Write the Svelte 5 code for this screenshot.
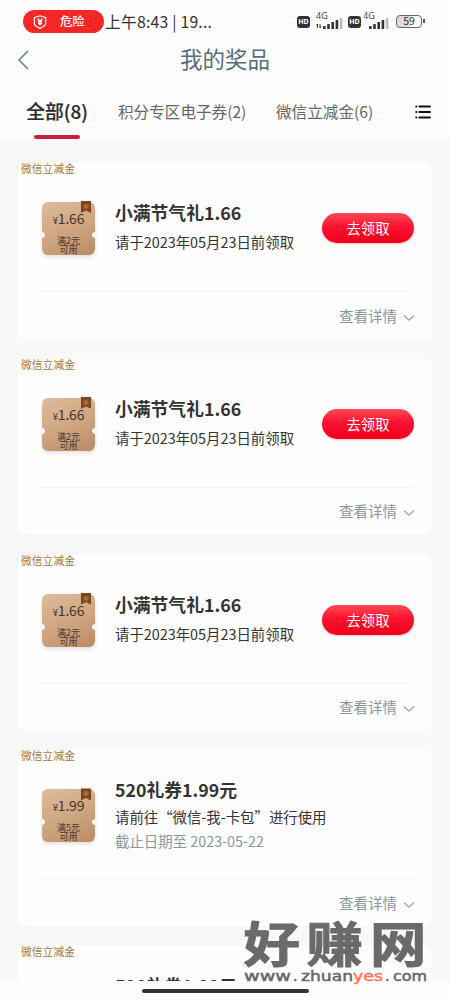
<script>
    const tabs = [
        { name: "全部(8)", width: 62 },
        { name: "积分专区电子券(2)", width: 128 },
        { name: "微信立减金(6)", width: 97 }
    ]
    let active = 0

    const coupon = {
        title: "小满节气礼1.66",
        text: "请于2023年05月23日前领取",
        price: "1.66",
        limit: "满2元",
        button: true
    }
    const used = {
        title: "520礼券1.99元",
        text: "请前往“微信-我-卡包”进行使用",
        date: "截止日期至 2023-05-22",
        price: "1.99",
        limit: "满5元"
    }
    const prizes = [coupon, coupon, coupon, used, used]
    const bars = [3, 5, 7, 9, 11]
</script>

<div class="page">
    <div class="status">
        <div class="danger">
            <svg width="14" height="14" viewBox="0 0 14 14">
                <path d="M7 .8 L12.7 2.7 V8.6 Q12.7 11 7 13.4 Q1.3 11 1.3 8.6 V2.7 Z" fill="none" stroke="#fff" stroke-width="1.2" />
                <path d="M4.8 3.8 L7 6.4 L9.2 3.8 M4.8 6.6 H9.2 M5 8.5 H9 M7 6.2 V10.6" fill="none" stroke="#fff" stroke-width="1.4" />
            </svg>
            <span>危险</span>
        </div>
        <span class="time">上午8:43 | 19...</span>
        <div class="signals">
            {#each [0, 1] as sim}
                <span class="hd">HD</span>
                <svg class="sim{sim}" width="28" height="18" viewBox="0 0 28 18">
                    <text x={sim ? -1 : 0} y="8" font-size="9" fill="#444">4G</text>
                    {#if sim === 0}
                        <path d="M1.5 13 V17 M0 14.5 L1.5 13 M4 13 V17 M4 17 L5.5 15.5" fill="none" stroke="#333" />
                    {/if}
                    {#each bars as h, i}
                        <rect x={(sim ? 5 : 7) + i * 4.2} y={18 - h} width="2.6" height={h} rx=".5" fill={i === 4 ? "#bbb" : "#333"} />
                    {/each}
                </svg>
            {/each}
            <div class="battery"><span>59</span></div>
        </div>
    </div>

    <div class="header">
        <svg width="12" height="20" viewBox="0 0 12 20">
            <path d="M10 1 L1 10 L10 19" fill="none" stroke="#607786" stroke-width="1.5" />
        </svg>
        <h1>我的奖品</h1>
    </div>

    <div class="tabs">
        {#each tabs as tab, i}
            <button class="tab" class:active={active === i} style="width: {tab.width}px" on:click={() => active = i}>{tab.name}</button>
        {/each}
        <svg width="16" height="14" viewBox="0 0 16 14">
            <path d="M4.3 1.5 H15 M4.3 7 H15 M4.3 12.5 H15" stroke="#111" stroke-width="1.8" stroke-linecap="round" />
            <path d="M1.3 1.5 H1.4 M1.3 7 H1.4 M1.3 12.5 H1.4" stroke="#111" stroke-width="2.1" stroke-linecap="round" />
        </svg>
    </div>

    <div class="list">
        {#each prizes as prize}
            <div class="card">
                <div class="tag">微信立减金</div>
                <div class="main">
                    <div class="ticket">
                        <i class="ribbon"></i>
                        <div class="price"><small>¥</small>{prize.price}</div>
                        <div class="limit">{prize.limit}<br>可用</div>
                    </div>
                    <div class="info" class:three={prize.date}>
                        <h2>{prize.title}</h2>
                        <p>{prize.text}</p>
                        {#if prize.date}
                            <p class="date">{prize.date}</p>
                        {/if}
                    </div>
                    {#if prize.button}
                        <button class="get">去领取</button>
                    {/if}
                </div>
                <div class="more">
                    <span>查看详情</span>
                    <svg width="12" height="8" viewBox="0 0 12 8">
                        <path d="M1 1.5 L6 6.2 L11 1.5" fill="none" stroke="#9aa5a8" stroke-width="1.3" />
                    </svg>
                </div>
            </div>
        {/each}
    </div>

    <div class="home"></div>

    <svg class="watermark" width="190" height="72" viewBox="0 0 190 72">
        <g class="name">
            <text x="2" y="0">好</text>
            <text x="54.5" y="0">赚</text>
            <text x="107.5" y="0">网</text>
        </g>
        <g class="site">
            <text x="3" y="64.5" textLength="47" lengthAdjust="spacingAndGlyphs">www</text>
            <text x="52" y="64.5">.</text>
            <text x="60" y="64.5" textLength="52" lengthAdjust="spacingAndGlyphs">zhuan</text>
            <text class="yes" x="112" y="64.5" textLength="30" lengthAdjust="spacingAndGlyphs">yes</text>
            <text x="144" y="64.5">.</text>
            <text x="152" y="64.5" textLength="34" lengthAdjust="spacingAndGlyphs">com</text>
        </g>
    </svg>
</div>

<style>
    :global(body) {
        margin: 0;
        background: #fdfdfd;
    }

    .page {
        width: 450px;
        height: 1000px;
        overflow: hidden;
        position: relative;
        display: flex;
        flex-direction: column;
        background: #fdfdfd;
        color: #333;
        font-family: "Noto Sans CJK SC", "Noto Sans", sans-serif;
    }

    button {
        border: none;
        padding: 0;
        background: none;
        font-family: inherit;
        white-space: nowrap;
    }

    .status {
        height: 43px;
        flex: none;
        display: flex;
        align-items: center;
        padding: 0 25px 0 23px;
    }

    .danger {
        width: 81px;
        height: 23px;
        box-sizing: border-box;
        padding-left: 10px;
        border-radius: 12px;
        background: #f82727;
        display: flex;
        align-items: center;
        gap: 13px;
        color: #fff;
        font-size: 12.3px;
        font-weight: 500;
    }

    .danger span {
        margin-top: -1px;
    }

    .time {
        margin: -1px 0 0 1px;
        font-size: 15.8px;
        letter-spacing: 0.2px;
        white-space: nowrap;
    }

    .signals {
        display: flex;
        align-items: center;
        margin-left: auto;
    }

    .signals text {
        font-family: "Noto Sans", sans-serif;
    }

    .hd {
        width: 13px;
        height: 12px;
        border-radius: 3px;
        background: #333;
        color: #fff;
        font: bold 7px/12px "Noto Sans", sans-serif;
        text-align: center;
    }

    .sim0 {
        margin: -3px 4px 0 6px;
    }

    .sim1 {
        margin: -3px 4px 0 3px;
    }

    .battery {
        position: relative;
        width: 26px;
        height: 13px;
        box-sizing: border-box;
        border: 1.5px solid #666;
        border-radius: 4px;
        background: linear-gradient(90deg, #dcdcdc 55%, #fdfdfd 55%);
        font: 400 10.5px/10px "Noto Sans CJK SC", sans-serif;
        text-align: center;
        margin-right: 3px;
    }

    .battery::after {
        content: "";
        position: absolute;
        right: -3.5px;
        top: 3px;
        width: 2px;
        height: 4px;
        background: #555;
    }

    .header {
        height: 34px;
        flex: none;
        display: flex;
        align-items: center;
        padding: 0 18px;
    }

    .header h1 {
        flex: 1;
        margin: -5px 12px 0 0;
        text-align: center;
        font-size: 22.5px;
        line-height: 34px;
        font-weight: 400;
        color: #566d7c;
    }

    .tabs {
        height: 62px;
        flex: none;
        display: flex;
        align-items: center;
        box-sizing: border-box;
        padding: 0 19px 0 26px;
        gap: 30px;
    }

    .tab {
        position: relative;
        height: 62px;
        font-size: 15.6px;
        line-height: 62px;
        margin-top: 5px;
        color: #666;
    }

    .tab.active {
        font-size: 18.8px;
        font-weight: 500;
        margin-top: 6px;
        color: #2b2b2b;
        -webkit-text-stroke: 0.2px #2b2b2b;
    }

    .tab.active::after {
        content: "";
        position: absolute;
        left: 8px;
        bottom: 3.5px;
        width: 46px;
        height: 4px;
        border-radius: 2px;
        background: #cc1f3b;
    }

    .tabs svg {
        margin: 8px 0 0 auto;
    }

    .list {
        height: 842px;
        flex: none;
        box-sizing: border-box;
        overflow: hidden;
        padding: 24px 18px 0;
        background: #f8f8f8;
        display: flex;
        flex-direction: column;
        gap: 20.3px;
    }

    .card {
        height: 175.5px;
        flex: none;
        border-radius: 8px;
        background: #fefefe;
    }

    .tag {
        height: 12px;
        padding-left: 3px;
        font-size: 10.8px;
        line-height: 11px;
        color: #a57837;
    }

    .main {
        height: 107px;
        display: flex;
        align-items: center;
        padding: 0 19px 0 24px;
    }

    .ticket {
        position: relative;
        width: 53px;
        height: 53px;
        flex: none;
        border-radius: 6px;
        background:
            radial-gradient(circle at 0 33px, #fefefe 2.5px, transparent 3.2px),
            radial-gradient(circle at 100% 33px, #fefefe 2.5px, transparent 3.2px),
            linear-gradient(155deg, #dfbc9c, #cca27e 60%, #b88a64);
        box-shadow: 0 2px 4px #00000020;
        text-align: center;
        color: #493528;
    }

    .ribbon {
        position: absolute;
        right: 4px;
        top: -1px;
        width: 10px;
        height: 12px;
        background: radial-gradient(circle at 50% 45%, #a66c3c 1.5px, #7d4520 3.5px);
        clip-path: polygon(0 0, 100% 0, 100% 100%, 50% 80%, 0 100%);
    }

    .price {
        padding-top: 8px;
        font-size: 14px;
        line-height: 17px;
        letter-spacing: -0.2px;
    }

    .price small {
        font-size: 9.5px;
    }

    .limit {
        margin-top: 7px;
        font-size: 9px;
        line-height: 9px;
    }

    .info {
        margin: -3px 0 0 20px;
        white-space: nowrap;
    }

    .info h2 {
        margin: -1px 0 1px;
        font-size: 17.8px;
        line-height: 30px;
        font-weight: 700;
    }

    .info p {
        margin: 0;
        font-size: 14.4px;
        line-height: 28px;
    }

    .three h2 {
        line-height: 28px;
    }

    .three p {
        line-height: 25px;
    }

    .info .date {
        line-height: 23px;
        color: #89979d;
    }

    .get {
        width: 92px;
        height: 30px;
        margin: -1px -1px 0 auto;
        border-radius: 15px;
        background: linear-gradient(#ff4a55, #fb1230 45%, #f0001b);
        box-shadow: 0 1px 2px #ff001c40;
        color: #fff;
        font-size: 14.4px;
        line-height: 28px;
    }

    .more {
        height: 46px;
        margin: 9px 17px 0 18px;
        border-top: 1px solid #f5f5f5;
        display: flex;
        align-items: center;
        justify-content: flex-end;
        gap: 6px;
        font-size: 14.5px;
        color: #899599;
    }

    .more svg {
        margin-top: 5px;
    }

    .home {
        width: 167px;
        height: 4px;
        margin: 8px auto 0;
        border-radius: 2px;
        background: #333;
    }

    .watermark {
        position: absolute;
        left: 241px;
        top: 916px;
    }

    .name {
        transform: translate(0, 46px) scale(1.2, 1.02);
        font-size: 47px;
        font-weight: 700;
        fill: #6a6a6a;
        stroke: #6a6a6a;
        stroke-width: 1;
        stroke-linejoin: round;
    }

    .site {
        font-family: "DejaVu Sans", sans-serif;
        font-size: 14.5px;
        fill: #666;
        stroke: #666;
        stroke-width: 0.5px;
    }

    .yes {
        fill: #ff7352;
        stroke: #ff7352;
    }
</style>
